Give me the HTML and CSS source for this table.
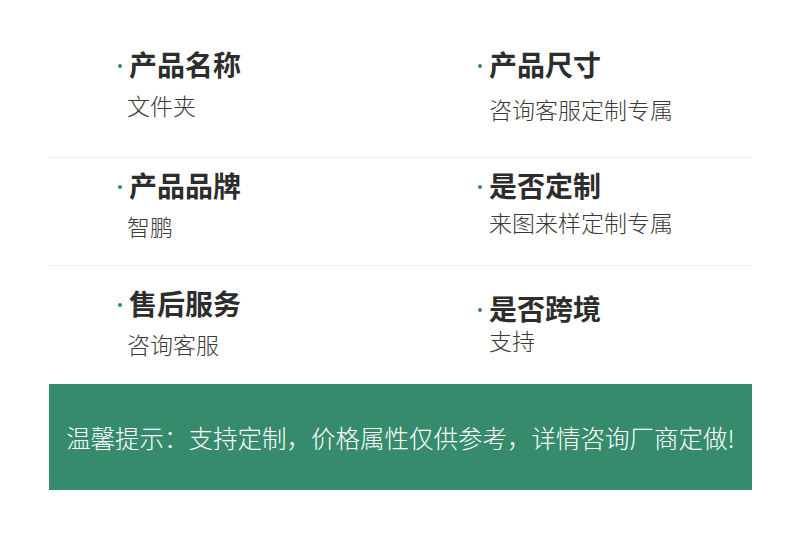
FILE: index.html
```html
<!DOCTYPE html>
<html lang="zh">
<head>
<meta charset="utf-8">
<link rel="stylesheet" href="styles.css">
</head>
<body>
<div class="page">
  <div class="row row-1">
    <div class="cell">
      <div class="title"><span class="dot"></span>产品名称</div>
      <div class="value">文件夹</div>
    </div>
    <div class="cell cell-r1">
      <div class="title"><span class="dot"></span>产品尺寸</div>
      <div class="value">咨询客服定制专属</div>
    </div>
  </div>
  <div class="row row-2">
    <div class="cell">
      <div class="title"><span class="dot"></span>产品品牌</div>
      <div class="value">智鹏</div>
    </div>
    <div class="cell cell-r2">
      <div class="title"><span class="dot"></span>是否定制</div>
      <div class="value">来图来样定制专属</div>
    </div>
  </div>
  <div class="row row-3">
    <div class="cell">
      <div class="title"><span class="dot"></span>售后服务</div>
      <div class="value">咨询客服</div>
    </div>
    <div class="cell cell-r3">
      <div class="title"><span class="dot"></span>是否跨境</div>
      <div class="value">支持</div>
    </div>
  </div>
  <div class="banner">温馨提示：支持定制，价格属性仅供参考，详情咨询厂商定做!</div>
</div>
</body>
</html>
```
FILE: styles.css
```css
html, body {
  margin: 0;
  padding: 0;
  background: #ffffff;
}
body {
  font-family: "Noto Sans CJK SC", "Noto Sans", sans-serif;
  color: #2b2b2b;
}
.page {
  width: 704px;
  margin-left: 48px;
}
.row {
  display: grid;
  grid-template-columns: 360px 1fr;
  padding-left: 70px;
  box-sizing: border-box;
  border-bottom: 1px solid #f1f1f1;
}
.row-1 { height: 158px; padding-top: 48px; }
.row-2 { height: 108px; padding-top: 11px; }
.row-3 { height: 118px; padding-top: 21px; border-bottom: none; }
.cell {
  display: flex;
  flex-direction: column;
}
.title {
  display: flex;
  align-items: center;
  font-size: 28px;
  font-weight: 700;
  line-height: 32px;
  color: #2d2d2d;
}
.dot {
  width: 4px;
  height: 4px;
  border-radius: 50%;
  background: #358a6a;
  margin-right: 7px;
  margin-top: 3px;
}
.value {
  font-size: 23px;
  line-height: 30px;
  font-weight: 300;
  color: #3a3a3a;
  margin-top: 10px;
  padding-left: 9px;
}
.cell-r1 .value { margin-top: 14px; padding-left: 11px; }
.cell-r2 .value { margin-top: 6px; padding-left: 11px; }
.cell-r3 { padding-top: 5px; }
.cell-r3 .value { margin-top: 1px; padding-left: 11px; }
.banner {
  height: 106px;
  background: #368b6c;
  color: #ffffff;
  font-size: 24.5px;
  font-weight: 300;
  display: flex;
  align-items: center;
  justify-content: center;
  margin-left: 1px;
}
```
